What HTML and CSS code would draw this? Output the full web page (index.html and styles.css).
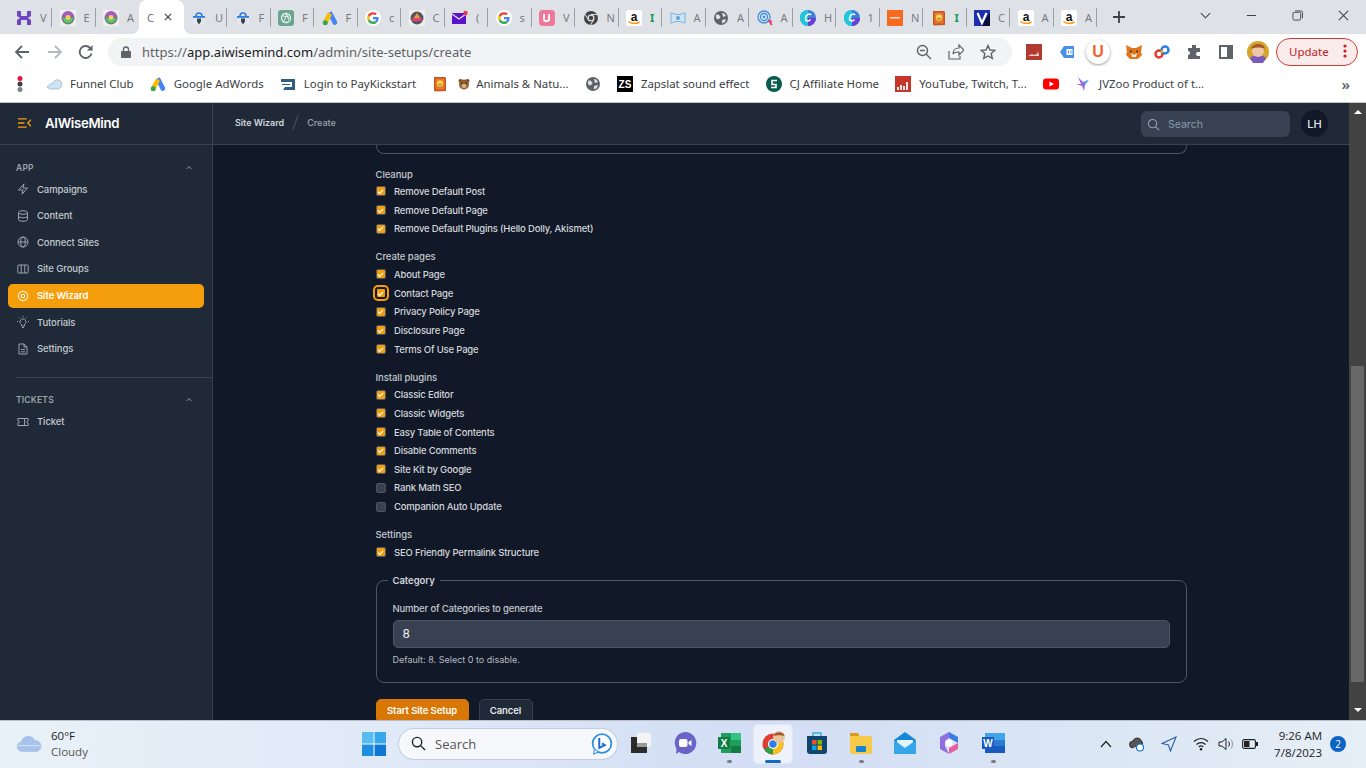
FILE: index.html
```html
<!DOCTYPE html>
<html lang="en">
<head>
<meta charset="utf-8">
<title>AIWiseMind - Site Wizard</title>
<link rel="stylesheet" href="styles.css">
</head>
<body>
<svg class="sprite" aria-hidden="true">
  <symbol id="orb" viewBox="0 0 16 16"><rect width="16" height="16" fill="#eef0ee"/><circle cx="8" cy="8" r="6.500" fill="#6b7f73"/><path d="M2 7a6 6 0 0 1 12 0z" fill="#a45cc0"/><path d="M3 8h10a5 5 0 0 1-10 0z" fill="#5fc46f"/><circle cx="8" cy="7.500" r="2.400" fill="#f3d35a"/></symbol>
  <symbol id="lockbag" viewBox="0 0 16 16"><path d="M5 6a3 3 0 0 1 6 0" fill="none" stroke="#2b7de9" stroke-width="1.600"/><rect x="2" y="6" width="12" height="1.800" fill="#2b7de9"/><rect x="2" y="8.500" width="12" height="6" fill="#e4e8ea"/><path d="M6 8.500h4v3l-2 3-2-3z" fill="#37474f"/></symbol>
  <symbol id="ads" viewBox="0 0 16 16"><path d="M9.700 1.200 15 11.500a2.400 2.400 0 0 1-4.200 2.300L5.600 3.600z" fill="#4285f4"/><path d="M6 2.400 1.100 11.600l4.100 2.300L10 4.600z" fill="#fbbc04"/><circle cx="3.200" cy="12.800" r="2.500" fill="#34a853"/></symbol>
  <symbol id="google" viewBox="0 0 16 16"><circle cx="8" cy="8" r="8" fill="#fff"/><path d="M13.600 8.100c0-.4 0-.8-.1-1.200H8v2.300h3.200a2.800 2.800 0 0 1-1.200 1.800l1.900 1.500c1.100-1 1.700-2.600 1.700-4.400z" fill="#4285f4"/><path d="M8 14c1.600 0 2.900-.5 3.900-1.500L10 11c-.5.4-1.200.6-2 .6-1.500 0-2.800-1-3.300-2.400l-2 1.500C3.700 12.700 5.700 14 8 14z" fill="#34a853"/><path d="M4.700 9.200a3.600 3.600 0 0 1 0-2.400l-2-1.500a6 6 0 0 0 0 5.400z" fill="#fbbc05"/><path d="M8 4.400c.9 0 1.600.3 2.200.9l1.700-1.700A6 6 0 0 0 2.700 5.300l2 1.500C5.200 5.400 6.500 4.400 8 4.400z" fill="#ea4335"/></symbol>
  <symbol id="canva" viewBox="0 0 16 16"><circle cx="8" cy="8" r="8" fill="#3b82d6"/><path d="M0 8a8 8 0 0 1 8-8v16a8 8 0 0 1-8-8z" fill="#1ec8d8"/><path d="M8 16a8 8 0 0 0 8-8H8z" fill="#6a3fd8"/><path d="M11 5c-1.500-2-5-.5-5.500 3-.4 3 2.800 4 5 1.500" fill="none" stroke="#fff" stroke-width="1.500"/></symbol>
  <symbol id="globe" viewBox="0 0 16 16"><circle cx="8" cy="8" r="7" fill="#5f6368"/><path d="M3 5c2-1 3 0 4 1s0 2-1 3-2 0-3-1zM9 3c2 0 3 1 4 3l-3 1zM9 10l4-1-1 3-3 1.500z" fill="#dee1e6"/></symbol>
  <symbol id="book" viewBox="0 0 16 16"><path d="M2 1h11l1 1v13l-11 .5-1-1z" fill="#c8541e"/><rect x="3.500" y="2.500" width="9" height="11" fill="#e27a34"/><circle cx="8" cy="7.500" r="3.200" fill="#f7d14b"/><path d="M6.300 8.300c.8 1 2.600 1 3.400 0" stroke="#a8501a" fill="none"/></symbol>
  <symbol id="chk" viewBox="0 0 10 10"><path d="M2.200 5.200 4.200 7.200 7.800 3.200" fill="none" stroke="#fff" stroke-width="1.300"/></symbol>
  <symbol id="up" viewBox="0 0 10 10"><path d="M2.500 6.200 5 3.800l2.500 2.400" fill="none" stroke="#6b7280" stroke-width="1.100"/></symbol>
</svg>

<div class="tabbar">
  <div class="tab"><svg class="fav" viewBox="0 0 16 16"><path d="M1 1h4v5h6V1h4v5l-3 2 3 2v5h-4v-5H5v5H1v-5l3-2-3-2z" fill="#6d46c4"/></svg><span class="tl">V</span></div>
  <div class="tab"><svg class="fav"><use href="#orb"/></svg><span class="tl">E</span></div>
  <div class="tab nosep"><svg class="fav"><use href="#orb"/></svg><span class="tl">A</span></div>
  <div class="tab-active"><span class="tl">C</span><svg class="close" viewBox="0 0 10 10"><path d="M1 1l8 8M9 1l-8 8" stroke="#3c4043" stroke-width="1.400"/></svg></div>
  <div class="tab"><svg class="fav"><use href="#lockbag"/></svg><span class="tl">U</span></div>
  <div class="tab"><svg class="fav"><use href="#lockbag"/></svg><span class="tl">F</span></div>
  <div class="tab"><svg class="fav" viewBox="0 0 16 16"><rect width="16" height="16" rx="3" fill="#6ba58f"/><circle cx="8" cy="8" r="4.500" fill="none" stroke="#e8f3ee" stroke-width="1.300"/><path d="M8 3.500 11 10M5 6l6 1M5.500 11.500 9 5" stroke="#e8f3ee"/></svg><span class="tl">F</span></div>
  <div class="tab"><svg class="fav"><use href="#ads"/></svg><span class="tl">F</span></div>
  <div class="tab"><svg class="fav"><use href="#google"/></svg><span class="tl">c</span></div>
  <div class="tab"><svg class="fav" viewBox="0 0 16 16"><rect width="16" height="16" fill="#eef0ee"/><circle cx="8" cy="8" r="6.500" fill="#5b5560"/><path d="M3 11a5 5 0 0 1 10 0z" fill="#e0447c"/><path d="M8 3 11 8H5z" fill="#e8a13c"/></svg><span class="tl">C</span></div>
  <div class="tab"><svg class="fav" viewBox="0 0 16 16"><rect y="3" width="14" height="11" fill="#5b12c8"/><path d="M0 4l7 5 7-5" fill="none" stroke="#e9e2fa" stroke-width="1.300"/><circle cx="13.500" cy="3" r="2.200" fill="#ea3d3d"/></svg><span class="tl">(</span></div>
  <div class="tab"><svg class="fav"><use href="#google"/></svg><span class="tl">s</span></div>
  <div class="tab"><svg class="fav" viewBox="0 0 16 16"><rect width="16" height="16" rx="3.500" fill="#ee7898"/><path d="M5 4v5c0 3 4 3 5 0V4m0 0v7" fill="none" stroke="#fff" stroke-width="1.800"/></svg><span class="tl">V</span></div>
  <div class="tab"><svg class="fav" viewBox="0 0 16 16"><circle cx="8" cy="8" r="7" fill="#444"/><circle cx="8" cy="8" r="3.500" fill="#dee1e6"/><circle cx="8" cy="8" r="2.200" fill="#444"/><path d="M8 4.500h6M5 9.500 2 4M10.500 10l-3 5" stroke="#dee1e6"/></svg><span class="tl">N</span></div>
  <div class="tab"><svg class="fav" viewBox="0 0 16 16"><rect width="16" height="16" rx="2.500" fill="#fff"/><text x="8" y="10.500" font-family="Liberation Sans" font-size="12" font-weight="700" text-anchor="middle" fill="#111">a</text><path d="M2.500 11.500c3.500 2.600 7.500 2.600 11 .5" fill="none" stroke="#f90" stroke-width="1.500"/></svg><span class="tl green">I</span></div>
  <div class="tab"><svg class="fav" viewBox="0 0 16 16"><path d="M1 3l5 1.500h4L15 3v10l-5-1.500H6L1 13z" fill="#cfe4f5" stroke="#79b4e3"/><circle cx="8" cy="8" r="2" fill="#5ea5dc"/></svg><span class="tl">A</span></div>
  <div class="tab"><svg class="fav"><use href="#globe"/></svg><span class="tl">A</span></div>
  <div class="tab"><svg class="fav" viewBox="0 0 16 16"><circle cx="7" cy="7" r="6" fill="none" stroke="#3d8fe3" stroke-width="1.300"/><circle cx="7" cy="7" r="3.500" fill="none" stroke="#3d8fe3" stroke-width="1.300"/><circle cx="7" cy="7" r="1.300" fill="#3d8fe3"/><path d="M11 10l4 5M14 10v5" stroke="#e23a6a" stroke-width="1.400"/></svg><span class="tl">A</span></div>
  <div class="tab"><svg class="fav"><use href="#canva"/></svg><span class="tl">H</span></div>
  <div class="tab"><svg class="fav"><use href="#canva"/></svg><span class="tl">1</span></div>
  <div class="tab"><svg class="fav" viewBox="0 0 16 16"><rect width="16" height="16" fill="#f76a1d"/><rect x="3" y="7" width="10" height="1.500" fill="#fde3d3"/></svg><span class="tl">N</span></div>
  <div class="tab"><svg class="fav"><use href="#book"/></svg><span class="tl green">I</span></div>
  <div class="tab"><svg class="fav" viewBox="0 0 16 16"><rect width="16" height="16" fill="#1c2fb0"/><path d="M16 3v13H7z" fill="#0b1038"/><path d="M3.500 3 8 13l4.500-10" fill="none" stroke="#fff" stroke-width="2.200"/></svg><span class="tl">C</span></div>
  <div class="tab"><svg class="fav" viewBox="0 0 16 16"><rect width="16" height="16" rx="2.500" fill="#fff"/><text x="8" y="10.500" font-family="Liberation Sans" font-size="12" font-weight="700" text-anchor="middle" fill="#111">a</text><path d="M2.500 11.500c3.500 2.600 7.500 2.600 11 .5" fill="none" stroke="#f90" stroke-width="1.500"/></svg><span class="tl">A</span></div>
  <div class="tab"><svg class="fav" viewBox="0 0 16 16"><rect width="16" height="16" rx="2.500" fill="#fff"/><text x="8" y="10.500" font-family="Liberation Sans" font-size="12" font-weight="700" text-anchor="middle" fill="#111">a</text><path d="M2.500 11.500c3.500 2.600 7.500 2.600 11 .5" fill="none" stroke="#f90" stroke-width="1.500"/></svg><span class="tl">A</span></div>
  <svg class="newtab" viewBox="0 0 12 12"><path d="M6 0v12M0 6h12" stroke="#3c4043" stroke-width="1.800"/></svg>
  <div class="winctl">
    <div class="wbtn"><svg viewBox="0 0 12 8" class="wi"><path d="M1 1.500 6 6.500 11 1.500" fill="none" stroke="#3c4043" stroke-width="1.100"/></svg></div>
    <div class="wbtn"><svg viewBox="0 0 12 12" class="wi"><path d="M1 6h10" stroke="#3c4043" stroke-width="1.100"/></svg></div>
    <div class="wbtn"><svg viewBox="0 0 12 12" class="wi"><rect x="1" y="2.500" width="8.500" height="8.500" rx="1.500" fill="none" stroke="#3c4043"/><path d="M3.500 1h6a2 2 0 0 1 2 2v6" fill="none" stroke="#3c4043"/></svg></div>
    <div class="wbtn"><svg viewBox="0 0 12 12" class="wi"><path d="M1 1l10 10M11 1 1 11" stroke="#3c4043" stroke-width="1.100"/></svg></div>
  </div>
</div>

<div class="toolbar">
  <svg class="nav" viewBox="0 0 16 16"><path d="M15 8H2M8 2 2 8l6 6" fill="none" stroke="#5f6368" stroke-width="1.800"/></svg>
  <svg class="nav" viewBox="0 0 16 16"><path d="M1 8h13M8 2l6 6-6 6" fill="none" stroke="#b5b8bc" stroke-width="1.800"/></svg>
  <svg class="nav" viewBox="0 0 16 16"><path d="M13.500 9.500A6 6 0 1 1 12 3.800L14 6" fill="none" stroke="#5f6368" stroke-width="1.800"/><path d="M14.500 1v5.500H9z" fill="#5f6368"/></svg>
  <div class="omni">
    <svg class="lock" viewBox="0 0 10 12"><path d="M2.500 5V3.500a2.500 2.500 0 0 1 5 0V5" fill="none" stroke="#5f6368" stroke-width="1.300"/><rect y="5" width="10" height="7" rx="1" fill="#5f6368"/></svg>
    <div class="url"><span class="dim">https://</span>app.aiwisemind.com<span class="dim">/admin/site-setups/create</span></div>
    <svg class="om" viewBox="0 0 16 16"><circle cx="6.500" cy="6.500" r="5" fill="none" stroke="#5f6368" stroke-width="1.400"/><path d="M10 10l5 5M4 6.500h5" stroke="#5f6368" stroke-width="1.400"/></svg>
    <svg class="om" viewBox="0 0 16 16"><path d="M1 7v8h11v-3M5 10c0-4 3-6 6-6V1l5 5-5 5V8c-3 0-5 0-6 2z" fill="none" stroke="#5f6368" stroke-width="1.200"/></svg>
    <svg class="om" viewBox="0 0 16 16"><path d="M8 1.500l2 4.500 4.800.4-3.600 3.200 1.100 4.800L8 12l-4.300 2.400 1.100-4.800L1.200 6.400 6 6z" fill="none" stroke="#5f6368" stroke-width="1.400"/></svg>
  </div>
  <div class="exts">
    <svg class="ext e1" viewBox="0 0 16 16"><rect width="16" height="16" fill="#b23a2e"/><path d="M2 12l4-2 2 1 3-1 1-3 1 5z" fill="#f3d0c8"/></svg>
    <svg class="ext e2" viewBox="0 0 16 16"><path d="M5 2h10v12H5L1 8z" fill="#4a90e8"/><path d="M7.500 5h6v6h-6z" fill="#fff"/><path d="M9 6.500h1v3H9zM11.500 6.500h1v3h-1z" fill="#4a90e8"/></svg>
    <div class="ubtn"><span class="uglyph">U</span></div>
    <svg class="ext e4" viewBox="0 0 16 16"><path d="M0 1l6 3h4l6-3-1 7 1 3-4 4H4l-4-4 1-3z" fill="#e2761b"/><path d="M5 9l3 2 3-2-1 4H6z" fill="#f5f0e8"/><circle cx="5" cy="7.500" r="1" fill="#333"/><circle cx="11" cy="7.500" r="1" fill="#333"/></svg>
    <svg class="ext e5" viewBox="0 0 16 16"><circle cx="5" cy="10" r="3.500" fill="none" stroke="#e8352e" stroke-width="2.500"/><circle cx="11" cy="6" r="3.500" fill="none" stroke="#2b7de9" stroke-width="2.500"/><path d="M7 8l2-1" stroke="#f5b400" stroke-width="3"/></svg>
    <svg class="ext e6" viewBox="0 0 16 16"><path d="M6 1h4v3h4v4h-2a2 2 0 0 0 0 4h2v3H2v-4a2 2 0 0 0 0-4V4h4z" fill="#5f6368"/></svg>
    <svg class="ext e7" viewBox="0 0 14 14"><rect x="1" y="1" width="12" height="12" fill="none" stroke="#5f6368" stroke-width="2"/><rect x="8" y="1" width="5" height="12" fill="#5f6368"/></svg>
    <svg class="avatar" viewBox="0 0 22 22"><circle cx="11" cy="11" r="11" fill="#d5a52c"/><path d="M3 17c3-4 13-4 16 0l-3 5H6z" fill="#7a5ac0"/><circle cx="11" cy="10" r="6" fill="#efc7a8"/><path d="M4 8c1-6 13-7 14 0-3-2-10-2-14 0z" fill="#a5582a"/></svg>
  </div>
  <div class="update"><span>Update</span><svg class="dots" viewBox="0 0 4 14"><circle cx="2" cy="2" r="1.600" fill="#c5221f"/><circle cx="2" cy="7" r="1.600" fill="#c5221f"/><circle cx="2" cy="12" r="1.600" fill="#c5221f"/></svg></div>
</div>

<div class="bookmarks">
  <svg class="bm-i apps" viewBox="0 0 8 16"><circle cx="4" cy="2.500" r="2.500" fill="#e8133c"/><circle cx="4" cy="8" r="2.500" fill="#3c4043"/><circle cx="4" cy="13.500" r="2.500" fill="#7c8288"/></svg>
  <div class="bm"><svg class="bm-i" viewBox="0 0 16 16"><path d="M1 11c2-3 5-4 6-3 0-4 6-6 8-2s-1 7-3 7H4z" fill="#cfe3f0" stroke="#8fb9d3" stroke-width=".8"/></svg><span>Funnel Club</span></div>
  <div class="bm"><svg class="bm-i"><use href="#ads"/></svg><span>Google AdWords</span></div>
  <div class="bm"><svg class="bm-i" viewBox="0 0 16 16"><path d="M1 3h14v11H3l2-3h7V6H1z" fill="#2f5d83"/><path d="M2 8h8v1H2z" fill="#2f5d83"/></svg><span>Login to PayKickstart</span></div>
  <div class="bm"><svg class="bm-i"><use href="#book"/></svg><svg class="bear" viewBox="0 0 12 12"><circle cx="2.500" cy="3" r="2" fill="#7a4a24"/><circle cx="9.500" cy="3" r="2" fill="#7a4a24"/><circle cx="6" cy="6.500" r="5" fill="#94602f"/><ellipse cx="6" cy="8" rx="2.500" ry="2" fill="#d9b48a"/><circle cx="4" cy="5" r=".7" fill="#222"/><circle cx="8" cy="5" r=".7" fill="#222"/></svg><span>Animals &amp; Natu...</span></div>
  <div class="bm"><svg class="bm-i"><use href="#globe"/></svg></div>
  <div class="bm"><svg class="bm-i" viewBox="0 0 16 16"><rect width="16" height="16" fill="#000"/><text x="8" y="11.500" font-family="Liberation Sans" font-size="10" font-weight="700" text-anchor="middle" fill="#fff">ZS</text></svg><span>Zapslat sound effect</span></div>
  <div class="bm"><svg class="bm-i" viewBox="0 0 16 16"><circle cx="8" cy="8" r="8" fill="#0b5a4e"/><path d="M11 4.500H6v4h4v3H5" fill="none" stroke="#fff" stroke-width="1.600"/></svg><span>CJ Affiliate Home</span></div>
  <div class="bm"><svg class="bm-i" viewBox="0 0 16 16"><rect width="16" height="16" fill="#c6362b"/><path d="M2 11h2v3H2zM5 9h2v5H5zM8 10h2v4H8zM11 6h2v8h-2z" fill="#fbe9e7"/></svg><span>YouTube, Twitch, T...</span></div>
  <div class="bm"><svg class="bm-i" viewBox="0 0 16 16"><rect y="2.500" width="16" height="11" rx="3" fill="#f00"/><path d="M6.500 5.500 11 8l-4.500 2.500z" fill="#fff"/></svg></div>
  <div class="bm"><svg class="bm-i" viewBox="0 0 16 16"><path d="M3 1l5 5 5-2-3 5-1 6-2-5-6-2 5 0z" fill="#9a6be0"/><path d="M9 6l5-2-4 5z" fill="#49b4e8"/></svg><span>JVZoo Product of t...</span></div>
  <div class="bm-more">»</div>
</div>

<div class="app">
  <aside class="sidebar">
    <div class="brand">
      <svg class="brand-i" viewBox="0 0 12 9"><path d="M0 .7h8M0 4.500h6M0 8.300h8M12 1.500 9 4.500l3 3" fill="none" stroke="#f59e0b" stroke-width="1.200"/></svg>
      <span>AIWiseMind</span>
    </div>
    <div class="side-sec">
      <div class="sec-h"><span>APP</span><svg class="caret"><use href="#up"/></svg></div>
      <div class="nav-i"><svg class="ni" viewBox="0 0 12 12"><path d="M7 .8 1.500 7H6l-1 4.200L10.500 5H6z" fill="none" stroke="#9ca3af"/></svg><span>Campaigns</span></div>
      <div class="nav-i"><svg class="ni" viewBox="0 0 12 12"><ellipse cx="6" cy="2.500" rx="4.500" ry="1.800" fill="none" stroke="#9ca3af"/><path d="M1.500 2.500v7c0 2.400 9 2.400 9 0v-7M1.500 6c0 2.400 9 2.400 9 0" fill="none" stroke="#9ca3af"/></svg><span>Content</span></div>
      <div class="nav-i"><svg class="ni" viewBox="0 0 12 12"><circle cx="6" cy="6" r="5" fill="none" stroke="#9ca3af"/><ellipse cx="6" cy="6" rx="2.200" ry="5" fill="none" stroke="#9ca3af"/><path d="M1 6h10" stroke="#9ca3af"/></svg><span>Connect Sites</span></div>
      <div class="nav-i"><svg class="ni" viewBox="0 0 12 12"><rect x=".8" y="2" width="10.400" height="8" rx="1" fill="none" stroke="#9ca3af"/><path d="M4.200 2v8M7.800 2v8" stroke="#9ca3af"/></svg><span>Site Groups</span></div>
      <div class="nav-i active"><svg class="ni" viewBox="0 0 12 12"><path d="M6 .8 7.200 2l1.700-.2.500 1.600 1.500.9-.5 1.700.5 1.600-1.500.9-.5 1.700-1.700-.2L6 11.200 4.800 10l-1.700.2-.5-1.700-1.500-.9.500-1.600-.5-1.700 1.500-.9.500-1.600L4.800 2z" fill="none" stroke="#fff"/><circle cx="6" cy="6" r="1.800" fill="none" stroke="#fff"/></svg><span>Site Wizard</span></div>
      <div class="nav-i"><svg class="ni" viewBox="0 0 12 12"><path d="M4.500 8.500a3 3 0 1 1 3 0V10h-3zM5 11.500h2M6 0v1M1 5.500H0M12 5.500h-1M2 1.500l.8.800M10 1.500l-.8.800" fill="none" stroke="#9ca3af"/></svg><span>Tutorials</span></div>
      <div class="nav-i"><svg class="ni" viewBox="0 0 12 12"><path d="M2 1h5l3 3v7H2zM7 1v3h3M4 6.500h4M4 8.800h4" fill="none" stroke="#9ca3af"/></svg><span>Settings</span></div>
    </div>
    <div class="side-div"></div>
    <div class="side-sec">
      <div class="sec-h"><span>TICKETS</span><svg class="caret"><use href="#up"/></svg></div>
      <div class="nav-i"><svg class="ni" viewBox="0 0 12 12"><path d="M.8 2.500h10.400v2.200a1.300 1.300 0 0 0 0 2.600v2.200H.8V7.300a1.300 1.300 0 0 0 0-2.600zM7.500 2.500v7" fill="none" stroke="#9ca3af"/></svg><span>Ticket</span></div>
    </div>
  </aside>

  <div class="main">
    <header class="topbar">
      <div class="crumbs"><span class="c1">Site Wizard</span><span class="slash"></span><span class="c2">Create</span></div>
      <div class="search"><svg class="s-i" viewBox="0 0 14 14"><circle cx="6" cy="6" r="4.500" fill="none" stroke="#9ca3af" stroke-width="1.100"/><path d="M9.500 9.500 13 13" stroke="#9ca3af" stroke-width="1.100"/></svg><span>Search</span></div>
      <div class="userchip">LH</div>
    </header>
    <main class="content">
      <div class="form">
        <div class="prev-fs"></div>
        <section class="group">
          <div class="g-label">Cleanup</div>
          <label class="opt"><span class="box"><svg><use href="#chk"/></svg></span>Remove Default Post</label>
          <label class="opt"><span class="box"><svg><use href="#chk"/></svg></span>Remove Default Page</label>
          <label class="opt"><span class="box"><svg><use href="#chk"/></svg></span>Remove Default Plugins (Hello Dolly, Akismet)</label>
        </section>
        <section class="group">
          <div class="g-label">Create pages</div>
          <label class="opt"><span class="box"><svg><use href="#chk"/></svg></span>About Page</label>
          <label class="opt"><span class="box focus"><svg><use href="#chk"/></svg></span>Contact Page</label>
          <label class="opt"><span class="box"><svg><use href="#chk"/></svg></span>Privacy Policy Page</label>
          <label class="opt"><span class="box"><svg><use href="#chk"/></svg></span>Disclosure Page</label>
          <label class="opt"><span class="box"><svg><use href="#chk"/></svg></span>Terms Of Use Page</label>
        </section>
        <section class="group">
          <div class="g-label">Install plugins</div>
          <label class="opt"><span class="box"><svg><use href="#chk"/></svg></span>Classic Editor</label>
          <label class="opt"><span class="box"><svg><use href="#chk"/></svg></span>Classic Widgets</label>
          <label class="opt"><span class="box"><svg><use href="#chk"/></svg></span>Easy Table of Contents</label>
          <label class="opt"><span class="box"><svg><use href="#chk"/></svg></span>Disable Comments</label>
          <label class="opt"><span class="box"><svg><use href="#chk"/></svg></span>Site Kit by Google</label>
          <label class="opt"><span class="box off"></span>Rank Math SEO</label>
          <label class="opt"><span class="box off"></span>Companion Auto Update</label>
        </section>
        <section class="group">
          <div class="g-label">Settings</div>
          <label class="opt"><span class="box"><svg><use href="#chk"/></svg></span>SEO Friendly Permalink Structure</label>
        </section>
        <fieldset class="fs">
          <legend>Category</legend>
          <div class="f-label">Number of Categories to generate</div>
          <div class="input">8</div>
          <div class="hint">Default: 8. Select 0 to disable.</div>
        </fieldset>
        <div class="actions">
          <button class="btn primary">Start Site Setup</button>
          <button class="btn ghost">Cancel</button>
        </div>
      </div>
    </main>
  </div>

  <div class="scrollbar">
    <div class="arrow-up"></div>
    <div class="thumb"></div>
    <div class="arrow-down"></div>
  </div>
</div>

<footer class="taskbar">
  <div class="weather">
    <svg class="w-i" viewBox="0 0 24 16"><path d="M5 15.500a4.500 4.500 0 0 1-.5-9 6.500 6.500 0 0 1 12.500-1 5 5 0 0 1 2 10z" fill="#a9c4ec" stroke="#8eb0e4" stroke-width=".6"/><path d="M1 10h22" stroke="#dbe7f8" stroke-width=".8"/></svg>
    <div class="w-t"><div class="w-a">60°F</div><div class="w-b">Cloudy</div></div>
  </div>
  <svg class="win" viewBox="0 0 24 24"><rect width="11.400" height="11.400" fill="#55bdf0"/><rect x="12.600" width="11.400" height="11.400" fill="#34a8ea"/><rect y="12.600" width="11.400" height="11.400" fill="#1b8fe0"/><rect x="12.600" y="12.600" width="11.400" height="11.400" fill="#0c78d4"/></svg>
  <div class="tsearch">
    <svg class="ts-i" viewBox="0 0 16 16"><circle cx="6.500" cy="6.500" r="5" fill="none" stroke="#222" stroke-width="1.500"/><path d="M10 10l5 5" stroke="#222" stroke-width="1.500"/></svg>
    <span>Search</span>
    <svg class="bing" viewBox="0 0 20 20"><circle cx="10" cy="9.500" r="8.500" fill="#fff" stroke="#2f8fe0" stroke-width="1.600"/><path d="M3 15l-.5 4 4-1.500" fill="#fff" stroke="#2f8fe0"/><path d="M7.500 4.500v9l5-2.500-2.500-1.500" fill="none" stroke="#1a6fd0" stroke-width="1.800"/></svg>
  </div>
  <div class="tile"><svg class="tk" viewBox="0 0 24 24"><rect x="2" y="6" width="16" height="16" fill="#2b2b2b"/><rect x="8" y="2" width="14" height="14" fill="#f4f4f4"/><rect x="8" y="12" width="10" height="4" fill="#9a9a9a"/></svg></div>
  <div class="tile"><svg class="tk" viewBox="0 0 24 24"><path d="M12 1a11 11 0 1 1-6 20l-3 2 .5-5A11 11 0 0 1 12 1z" fill="#6a63c8"/><rect x="6" y="8" width="8.500" height="8" rx="2" fill="#fff"/><path d="M15.500 11l3-2v6l-3-2z" fill="#fff"/></svg></div>
  <div class="tile dot"><svg class="tk" viewBox="0 0 24 24"><rect x="4" y="2" width="20" height="20" fill="#1f9d5c"/><rect x="14" y="2" width="10" height="7" fill="#33c481"/><rect x="14" y="15" width="10" height="7" fill="#107c41"/><rect x="1" y="6" width="12" height="12" fill="#107c41"/><text x="7" y="15.500" font-family="Liberation Sans" font-size="10" font-weight="700" text-anchor="middle" fill="#fff">X</text></svg></div>
  <div class="tile cur"><svg class="tk" viewBox="0 0 24 24"><circle cx="12" cy="13" r="10.500" fill="#e33b2e"/><path d="M12 13 3 18a10.500 10.500 0 0 0 9 5.500z" fill="#2f9e44"/><path d="M12 13l9.500-4a10.500 10.500 0 0 1-9.500 14.500z" fill="#f8c21c"/><circle cx="12" cy="13" r="5" fill="#fff"/><circle cx="12" cy="13" r="3.800" fill="#2b7de9"/><circle cx="18" cy="6" r="6" fill="#e9c39d"/><path d="M12.500 5c1-5 10-5 11 0-3-1-8-1-11 0z" fill="#a5582a"/></svg></div>
  <div class="tile"><svg class="tk" viewBox="0 0 24 24"><path d="M8 5V2h8v3" fill="none" stroke="#2ab4ea" stroke-width="1.500"/><path d="M2 5h20v15a3 3 0 0 1-3 3H5a3 3 0 0 1-3-3z" fill="#11466f"/><rect x="7" y="9" width="4.500" height="4.500" fill="#f25022"/><rect x="12.500" y="9" width="4.500" height="4.500" fill="#7fba00"/><rect x="7" y="14.500" width="4.500" height="4.500" fill="#00a4ef"/><rect x="12.500" y="14.500" width="4.500" height="4.500" fill="#ffb900"/></svg></div>
  <div class="tile dot"><svg class="tk" viewBox="0 0 24 24"><path d="M1 4a2 2 0 0 1 2-2h6l2 3h10a2 2 0 0 1 2 2v14a2 2 0 0 1-2 2H3a2 2 0 0 1-2-2z" fill="#f7c948"/><path d="M1 2h8l1 3H1z" fill="#d99a1c"/><rect x="7" y="15" width="10" height="6" rx="1" fill="#1386d2"/></svg></div>
  <div class="tile"><svg class="tk" viewBox="0 0 24 24"><path d="M1 9 12 1l11 8v14H1z" fill="#1688d8"/><path d="M4 9h16v8l-8 4-8-4z" fill="#e8f4fb"/><path d="M1 9l11 8 11-8v14H1z" fill="#35a7e8"/></svg></div>
  <div class="tile"><svg class="tk" viewBox="0 0 24 24"><path d="M12 1 21 6v6l-9-5z" fill="#3b7de0"/><path d="M21 12v6l-9 5v-6z" fill="#e85fa0"/><path d="M12 23 3 18V6l9-5v6l-4 3v5z" fill="#8f6fe0"/><circle cx="12" cy="12" r="3.500" fill="#fff"/></svg></div>
  <div class="tile dot"><svg class="tk" viewBox="0 0 24 24"><rect x="4" y="2" width="20" height="20" fill="#2b7cd3"/><rect x="4" y="2" width="20" height="7" fill="#41a5ee"/><rect x="4" y="15" width="20" height="7" fill="#185abd"/><rect x="1" y="6" width="12" height="12" fill="#185abd"/><text x="7" y="15.500" font-family="Liberation Sans" font-size="10" font-weight="700" text-anchor="middle" fill="#fff">W</text></svg></div>
  <div class="tray">
    <svg class="tr t-caret" viewBox="0 0 12 8"><path d="M1 7l5-5.500L11 7" fill="none" stroke="#222" stroke-width="1.200"/></svg>
    <svg class="tr t-cloud" viewBox="0 0 16 16"><path d="M4 12a3.500 3.500 0 0 1 0-7 4.500 4.500 0 0 1 8.500 0A3 3 0 0 1 13 9" fill="#555" stroke="#333"/><circle cx="11" cy="11.500" r="3.500" fill="#fff" stroke="#1a78d0" stroke-width="1.200"/></svg>
    <svg class="tr t-arrow" viewBox="0 0 16 16"><path d="M15 1 1 7.500l6.500 1.500L9.500 15z" fill="none" stroke="#2b5fa8" stroke-width="1.100"/></svg>
    <svg class="tr t-wifi" viewBox="0 0 16 14"><path d="M1 4.500c4-4 10-4 14 0M3.500 7.500c2.500-2.500 6.500-2.500 9 0M5.800 10c1.200-1.100 3.200-1.100 4.400 0" fill="none" stroke="#222" stroke-width="1.200"/><circle cx="8" cy="12.300" r="1.200" fill="#222"/></svg>
    <svg class="tr t-spk" viewBox="0 0 16 16"><path d="M1 6h3l4-3.500v11L4 10H1z" fill="none" stroke="#222"/><path d="M10.500 5.500c1.200 1.500 1.200 3.500 0 5" fill="none" stroke="#222"/><path d="M13 3.500c2 2.500 2 6.500 0 9" fill="none" stroke="#999"/></svg>
    <svg class="tr t-batt" viewBox="0 0 16 10"><rect x=".6" y=".6" width="12.800" height="8.800" rx="1.500" fill="none" stroke="#222" stroke-width="1.100"/><rect x="2" y="2" width="5.500" height="6" fill="#222"/><rect x="14" y="3" width="2" height="4" fill="#222"/></svg>
    <div class="clock"><div>9:26 AM</div><div>7/8/2023</div></div>
    <div class="badge">2</div>
  </div>
</footer>
</body>
</html>
```
FILE: styles.css
```css
* { box-sizing: border-box; }
html, body { margin: 0; padding: 0; height: 768px; overflow: hidden; }
body { display: flex; flex-direction: column; width: 1366px; font-family: "Noto Sans", sans-serif; background: #111827; }
.sprite { width: 0; height: 0; position: absolute; }

/* Browser tab strip */
.tabbar { height: 34px; background: #dee1e6; display: flex; align-items: flex-start; padding-left: 8.5px; flex: none; }
.tab { width: 43.5px; height: 19px; margin-top: 8px; padding-left: 7.5px; display: flex; align-items: center; border-right: 1px solid #9aa0a6; }
.tab.nosep { border-right-color: transparent; }
.fav { width: 16px; height: 16px; flex: none; }
.tl { width: 8px; margin-left: 8px; font-size: 11px; color: #5f6368; line-height: 19px; opacity: .8; white-space: nowrap; }
.tl.green { color: #0f9d58; font-weight: 700; opacity: 1; }
.tab-active { width: 44.5px; height: 34px; background: #fff; border-radius: 8px 8px 0 0; display: flex; align-items: center; padding-left: 8px; flex: none; position: relative; }
.tab-active::before, .tab-active::after { content: ""; position: absolute; bottom: 0; width: 8px; height: 8px; }
.tab-active::before { left: -8px; background: radial-gradient(circle at 0 0, transparent 8px, #fff 8px); }
.tab-active::after { right: -8px; background: radial-gradient(circle at 100% 0, transparent 8px, #fff 8px); }
.tab-active .tl { margin-left: 0; width: 8px; opacity: .9; }
.close { width: 8px; height: 8px; margin-left: 9px; }
.newtab { width: 12px; height: 12px; margin: 11px 0 0 16px; flex: none; }
.winctl { margin-left: auto; display: flex; }
.wbtn { width: 46px; height: 30px; display: flex; align-items: center; justify-content: center; }
.wi { width: 11px; height: 11px; }

/* Toolbar */
.toolbar { height: 32px; background: #fff; display: flex; align-items: center; flex: none; }
.nav { width: 16px; height: 16px; margin-left: 14px; margin-top: 4px; flex: none; }
.nav + .nav { margin-left: 17px; }
.nav + .nav + .nav { margin-left: 15px; }
.omni { width: 904px; height: 28px; margin-left: 14px; background: #f1f3f4; border-radius: 14px; display: flex; align-items: center; padding-left: 13px; flex: none; margin-top: 4px; }
.lock { width: 10px; height: 12px; flex: none; }
.url { margin-left: 11px; width: 780px; font-size: 13px; color: #202124; letter-spacing: .02px; white-space: nowrap; }
.dim { color: #5f6368; }
.om { width: 16px; height: 16px; margin-right: 16px; flex: none; }
.exts { display: flex; align-items: center; margin-left: 14px; margin-top: 4px; flex: none; }
.ext { width: 16px; height: 16px; flex: none; }
.e2 { margin-left: 17px; }
.ubtn { width: 24px; height: 24px; border-radius: 50%; background: #fff; box-shadow: 0 1px 3px rgba(0,0,0,.4); display: flex; align-items: center; justify-content: center; margin-left: 11px; }
.uglyph { font: 700 16px "Liberation Sans", sans-serif; color: #f0642f; }
.e4 { margin-left: 16px; }
.e5 { margin-left: 12px; }
.e6 { margin-left: 16px; }
.e7 { margin-left: 17px; width: 14px; height: 14px; }
.avatar { width: 22px; height: 22px; margin-left: 14px; }
.update { width: 82px; height: 28px; margin: 4px 0 0 7px; padding: 0 0 2px 12px; border: 1px solid #d33b32; border-radius: 14px; background: #f9ecea; display: flex; align-items: center; font-size: 11.5px; color: #c5221f; flex: none; }
.dots { width: 4px; height: 14px; margin-left: 14px; }

/* Bookmarks */
.bookmarks { height: 37px; background: #fff; border-bottom: 1px solid #c4c7ca; display: flex; align-items: center; padding-left: 16px; font-size: 11.4px; color: #3c4043; flex: none; }
.bm-i { width: 16px; height: 16px; flex: none; }
.apps { width: 8px; margin-right: 22px; }
.bm { display: flex; align-items: center; margin-right: 16.2px; white-space: nowrap; }
.bm span { margin: -2px 0 0 8px; }
.bear { width: 12px; height: 12px; margin-left: 10px; }
.bear + span { margin-left: 6px; }
.bm-more { margin-left: auto; margin-right: 16px; font-size: 15px; color: #5f6368; font-weight: 600; }

/* App */
.app { height: 617px; display: flex; flex: none; overflow: hidden; color: #d1d5db; font-family: Inter, sans-serif; }
.sidebar { width: 213px; background: #1f2937; border-right: 1px solid #374151; flex: none; }
.brand { height: 42px; border-bottom: 1px solid #374151; display: flex; align-items: center; padding: 0 0 1px 18px; color: #fff; font-size: 13.2px; font-weight: 600; letter-spacing: -.3px; }
.brand-i { width: 13px; height: 10px; margin-right: 14px; }
.side-sec { padding: 0 8px; }
.sec-h { height: 17px; margin: 14px 0 0; padding: 0 8px; display: flex; align-items: center; justify-content: space-between; font-size: 8.5px; font-weight: 600; color: #9ca3af; letter-spacing: .2px; }
.caret { width: 10px; height: 10px; margin-right: 2px; }
.nav-i { height: 24px; margin-bottom: 2.67px; padding-left: 9px; border-radius: 5px; display: flex; align-items: center; font-size: 9.5px; font-weight: 500; color: #c3c8d0; letter-spacing: -.1px; }
.sec-h + .nav-i { margin-top: 1px; }
.nav-i.active { background: #f59e0b; color: #fff; font-weight: 600; }
.ni { width: 12px; height: 12px; margin-right: 8px; flex: none; }
.side-div { height: 1px; background: #374151; margin: 16px 0 0 16px; }

.main { flex: 1; min-width: 0; display: flex; flex-direction: column; }
.topbar { height: 42px; background: #1f2937; border-bottom: 1px solid #374151; display: flex; align-items: center; padding: 0 21px 0 22px; flex: none; }
.crumbs { display: flex; align-items: center; font-size: 9px; font-weight: 500; margin-top: -2px; }
.c1 { color: #d1d5db; font-weight: 600; letter-spacing: -.05px; }
.slash { width: 1px; height: 15px; background: #4b5563; transform: rotate(20deg); margin: 0 11px; }
.c2 { color: #9ca3af; }
.search { width: 149px; height: 26px; margin-left: auto; background: #374151; border-radius: 6px; display: flex; align-items: center; padding: 1px 0 0 6px; font-size: 10.5px; color: #8b9ab0; }
.s-i { width: 13px; height: 13px; margin-right: 8px; }
.userchip { width: 27px; height: 27px; margin-left: 11px; border-radius: 50%; background: #111827; color: #e5e7eb; display: flex; align-items: center; justify-content: center; font-size: 11px; font-weight: 500; }

.content { flex: 1; background: #111827; overflow: hidden; }
.form { width: 811px; margin: 0 auto; }
.prev-fs { height: 9px; border: 1px solid #4b5563; border-top: 0; border-radius: 0 0 8px 8px; margin-bottom: 11.5px; }
.group { margin-bottom: 10.33px; }
.g-label { height: 16.67px; line-height: 18.67px; font-size: 9.5px; font-weight: 500; color: #c3c8d0; letter-spacing: -.06px; }
.opt { height: 18.67px; display: flex; align-items: center; font-size: 9.5px; font-weight: 500; color: #d1d5db; letter-spacing: -.18px; }
.box { width: 10px; height: 10px; margin-right: 8.5px; background: #f59e0b; border: 1px solid #4b5563; border-radius: 2px; display: flex; align-items: center; justify-content: center; flex: none; }
.box svg { width: 9px; height: 9px; flex: none; }
.box.off { background: #374151; }
.box.focus { border-color: #111827; box-shadow: 0 0 0 1px #111827, 0 0 0 3px #f59e0b; }
.fs { margin: 0; padding: 0 16px 0 16px; border: 1px solid #4b5563; border-radius: 8px; height: 111px; }
.fs legend { margin-left: -5px; padding: 0 5px; height: 17px; line-height: 17px; font-size: 9.5px; font-weight: 600; color: #d1d5db; letter-spacing: -.05px; }
.f-label { margin-top: 12px; height: 16px; line-height: 16px; font-size: 9.5px; font-weight: 500; color: #c3c8d0; letter-spacing: -.16px; }
.input { margin-top: 3px; height: 28px; padding-left: 9px; line-height: 26px; background: #374151; border: 1px solid #4b5563; border-radius: 5px; font-size: 12px; color: #f3f4f6; }
.hint { margin-top: 4px; height: 16px; line-height: 16px; font-size: 9px; color: #b5bac3; }
.actions { margin-top: 16px; display: flex; gap: 10px; }
.btn { height: 24px; border-radius: 5px; font: 600 9.5px Inter, sans-serif; letter-spacing: -.1px; padding: 0; }
.primary { width: 93px; background: #d97706; border: 1px solid #d97706; color: #fff; }
.ghost { width: 54px; background: #1f2937; border: 1px solid #374151; color: #e5e7eb; }

.scrollbar { width: 17px; background: #424242; flex: none; display: flex; flex-direction: column; align-items: center; }
.arrow-up { margin-top: 7px; border: 4px solid transparent; border-top: 0; border-bottom: 4px solid #fff; }
.thumb { width: 13px; height: 316px; margin-top: 252px; background: #686868; }
.arrow-down { margin-top: 26px; border: 4px solid transparent; border-bottom: 0; border-top: 4px solid #fff; }

/* Taskbar */
.taskbar { height: 48px; flex: none; border-top: 1px solid #b9c0c9; padding-bottom: 2px; background: linear-gradient(90deg, #e9f1f8 0%, #dfe9f7 30%, #d3ddf4 55%, #dbe6f5 80%, #e6eff6 100%); display: flex; align-items: center; font-family: "Open Sans", sans-serif; color: #222; }
.weather { width: 362px; display: flex; align-items: center; padding-left: 17px; flex: none; }
.w-i { width: 25px; height: 17px; margin-right: 9px; }
.w-t { font-size: 11.5px; line-height: 16px; }
.w-b { color: #555; }
.win { width: 24px; height: 24px; flex: none; }
.tsearch { width: 218px; height: 30px; margin: 0 5px 0 13px; border-radius: 15px; background: #f6f8fc; box-shadow: 0 0 0 1px #c3cce0; display: flex; align-items: center; padding-left: 12px; font-size: 13px; color: #555; flex: none; }
.ts-i { width: 15px; height: 15px; margin-right: 9px; }
.bing { width: 22px; height: 22px; margin-left: auto; margin-right: 4px; }
.tile { width: 38px; height: 38px; margin-right: 6px; border-radius: 4px; display: flex; align-items: center; justify-content: center; position: relative; flex: none; }
.tk { width: 24px; height: 24px; margin-top: -2px; }
.dot::after { content: ""; position: absolute; left: 16.5px; bottom: 0; width: 5px; height: 3px; border-radius: 2px; background: #7a7f86; }
.cur { background: rgba(255,255,255,.6); box-shadow: 0 0 0 1px rgba(255,255,255,.3); }
.cur::after { content: ""; position: absolute; left: 11px; bottom: 0; width: 16px; height: 3px; border-radius: 2px; background: #0c6cc7; }
.tray { margin-left: auto; width: 272px; display: flex; align-items: center; padding-left: 6px; flex: none; }
.tr { flex: none; }
.t-caret { width: 12px; height: 8px; }
.t-cloud { width: 16px; height: 16px; margin-left: 17px; }
.t-arrow { width: 16px; height: 16px; margin-left: 16px; }
.t-wifi { width: 16px; height: 14px; margin-left: 16px; }
.t-spk { width: 16px; height: 16px; margin-left: 9px; }
.t-batt { width: 16px; height: 10px; margin-left: 8px; }
.clock { width: 60px; margin-left: 4px; text-align: right; font-size: 11.5px; line-height: 17px; color: #222; }
.badge { width: 16px; height: 16px; margin-left: 8px; border-radius: 50%; background: #0c63c4; color: #fff; font-size: 10px; display: flex; align-items: center; justify-content: center; }
```
